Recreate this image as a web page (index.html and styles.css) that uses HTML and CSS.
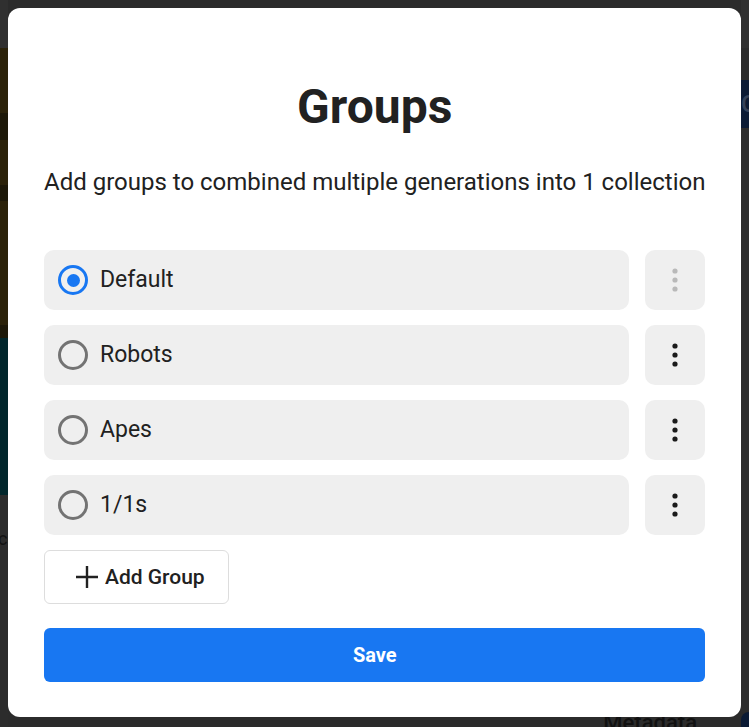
FILE: index.html
```html
<!DOCTYPE html>
<html lang="en">
<head>
<meta charset="utf-8">
<title>Groups</title>
<link rel="stylesheet" href="styles.css">
</head>
<body>
<div class="page">
  <aside class="page-left">
    <div class="seg seg-head"></div>
    <div class="seg olive h65"></div>
    <div class="seg olive-dark h27"></div>
    <div class="seg olive h45"></div>
    <div class="seg olive-dark h16"></div>
    <div class="seg olive h124"></div>
    <div class="seg olive-dark h13"></div>
    <div class="seg teal h157"></div>
    <div class="seg gray-rest"><span class="left-letter">co</span></div>
  </aside>
  <main class="page-main">
    <div class="page-foot">
      <span class="foot-label">Metadata</span>
    </div>
  </main>
  <aside class="page-right">
    <div class="seg seg-head"></div>
    <div class="seg h32"></div>
    <div class="seg navy h48"><span class="right-letter">G</span></div>
    <div class="seg gray-rest"></div>
    <div class="seg pill"></div>
  </aside>
</div>

<div class="overlay">
  <section class="modal">
    <h1 class="modal-title">Groups</h1>
    <p class="modal-sub">Add groups to combined multiple generations into 1 collection</p>

    <div class="group-list">
      <div class="group-row">
        <label class="group-item">
          <span class="radio radio-on"><span class="radio-dot"></span></span>
          <span class="group-name">Default</span>
        </label>
        <button class="more-btn more-disabled" aria-label="More">
          <svg width="6" height="24" viewBox="0 0 6 24"><circle cx="3" cy="3" r="2.6"/><circle cx="3" cy="12" r="2.6"/><circle cx="3" cy="21" r="2.6"/></svg>
        </button>
      </div>
      <div class="group-row">
        <label class="group-item">
          <span class="radio"></span>
          <span class="group-name">Robots</span>
        </label>
        <button class="more-btn" aria-label="More">
          <svg width="6" height="24" viewBox="0 0 6 24"><circle cx="3" cy="3" r="2.6"/><circle cx="3" cy="12" r="2.6"/><circle cx="3" cy="21" r="2.6"/></svg>
        </button>
      </div>
      <div class="group-row">
        <label class="group-item">
          <span class="radio"></span>
          <span class="group-name">Apes</span>
        </label>
        <button class="more-btn" aria-label="More">
          <svg width="6" height="24" viewBox="0 0 6 24"><circle cx="3" cy="3" r="2.6"/><circle cx="3" cy="12" r="2.6"/><circle cx="3" cy="21" r="2.6"/></svg>
        </button>
      </div>
      <div class="group-row">
        <label class="group-item">
          <span class="radio"></span>
          <span class="group-name">1/1s</span>
        </label>
        <button class="more-btn" aria-label="More">
          <svg width="6" height="24" viewBox="0 0 6 24"><circle cx="3" cy="3" r="2.6"/><circle cx="3" cy="12" r="2.6"/><circle cx="3" cy="21" r="2.6"/></svg>
        </button>
      </div>
      <div class="add-wrap">
        <button class="add-btn">
          <svg class="plus" width="22" height="22" viewBox="0 0 22 22"><path d="M11 0V22M0 11H22"/></svg>
          <span>Add Group</span>
        </button>
      </div>
    </div>

    <button class="save-btn">Save</button>
  </section>
</div>
</body>
</html>
```

FILE: styles.css
```css
* { box-sizing: border-box; }

html, body {
  margin: 0;
  height: 100%;
}

body {
  font-family: Roboto, "Noto Sans", "Liberation Sans", sans-serif;
  background: #2b2b2b;
  overflow: hidden;
}

/* underlying page, dimmed */
.page {
  display: grid;
  grid-template-columns: 8px 1fr 8px;
  height: 727px;
}

.page-left, .page-right {
  display: flex;
  flex-direction: column;
}

.seg { flex: none; }
.seg-head { height: 48px; background: #303030; }
.olive { background: #2b2209; }
.olive-dark { background: #1d1808; }
.teal { background: #01262b; }
.navy { background: #0b1b35; overflow: hidden; }
.gray-rest { flex: 1; background: #2c2c2c; }
.h13 { height: 13px; }
.h16 { height: 16px; }
.h27 { height: 27px; }
.h32 { height: 32px; }
.h45 { height: 45px; }
.h48 { height: 48px; }
.h65 { height: 65px; }
.h124 { height: 124px; }
.h157 { height: 157px; }

.left-letter {
  display: block;
  padding-top: 34px;
  font-size: 18px;
  line-height: 20px;
  color: #121212;
  margin-left: -2px;
}

.right-letter {
  display: block;
  font-size: 24px;
  line-height: 48px;
  color: #34425a;
  font-weight: 500;
}

.pill {
  height: 15px;
  background: #0b1b35;
  border-top-left-radius: 14px;
}

.page-main {
  display: flex;
  flex-direction: column;
  justify-content: flex-end;
}

.page-foot {
  display: flex;
  align-items: flex-start;
  justify-content: flex-end;
  height: 12px;
  padding-right: 44px;
  overflow: hidden;
}

.foot-label {
  font-size: 22px;
  line-height: 22px;
  font-weight: 500;
  color: #111111;
  margin-top: -3px;
}

/* modal */
.overlay {
  position: fixed;
  inset: 0;
  padding: 8px 8px 10px 8px;
  display: flex;
}

.modal {
  flex: 1;
  background: #ffffff;
  border-radius: 12px;
  padding: 0 36px 35px;
  display: flex;
  flex-direction: column;
  color: #212121;
}

.modal-title {
  margin: 71px 0 0;
  font-size: 48px;
  line-height: 56px;
  font-weight: 700;
  text-align: center;
  color: #212121;
}

.modal-sub {
  margin: 33px 0 0;
  font-size: 24px;
  line-height: 28px;
  text-align: center;
  color: #212121;
  white-space: nowrap;
}

.group-list {
  margin-top: 54px;
  display: flex;
  flex-direction: column;
  gap: 15px;
}

.group-row {
  display: grid;
  grid-template-columns: 1fr 60px;
  gap: 16px;
  height: 60px;
}

.group-item {
  display: flex;
  align-items: center;
  gap: 12px;
  padding-left: 14px;
  background: #efefef;
  border-radius: 10px;
  cursor: pointer;
}

.radio {
  width: 30px;
  height: 30px;
  border: 3px solid #737373;
  border-radius: 50%;
  display: flex;
  align-items: center;
  justify-content: center;
  flex: none;
}

.radio-on { border-color: #1877f2; }

.radio-dot {
  width: 13px;
  height: 13px;
  border-radius: 50%;
  background: #1877f2;
}

.group-name {
  font-size: 23px;
  line-height: 30px;
  color: #212121;
}

.more-btn {
  border: none;
  background: #efefef;
  border-radius: 10px;
  padding: 0;
  display: flex;
  align-items: center;
  justify-content: center;
  cursor: pointer;
}

.more-btn svg { fill: #1b1b1b; }
.more-disabled svg { fill: #b9b9b9; }

.add-wrap { display: flex; }

.add-btn {
  height: 54px;
  display: flex;
  align-items: center;
  gap: 7px;
  padding: 0 23px 0 31px;
  background: #ffffff;
  border: 1px solid #dddddd;
  border-radius: 6px;
  font-family: inherit;
  font-size: 21px;
  font-weight: 500;
  color: #212121;
  cursor: pointer;
}

.plus {
  stroke: #212121;
  stroke-width: 2.4;
  fill: none;
}

.save-btn {
  margin-top: 24px;
  height: 54px;
  border: none;
  border-radius: 6px;
  background: #1877f2;
  color: #ffffff;
  font-family: inherit;
  font-size: 20px;
  font-weight: 700;
  cursor: pointer;
}
```
